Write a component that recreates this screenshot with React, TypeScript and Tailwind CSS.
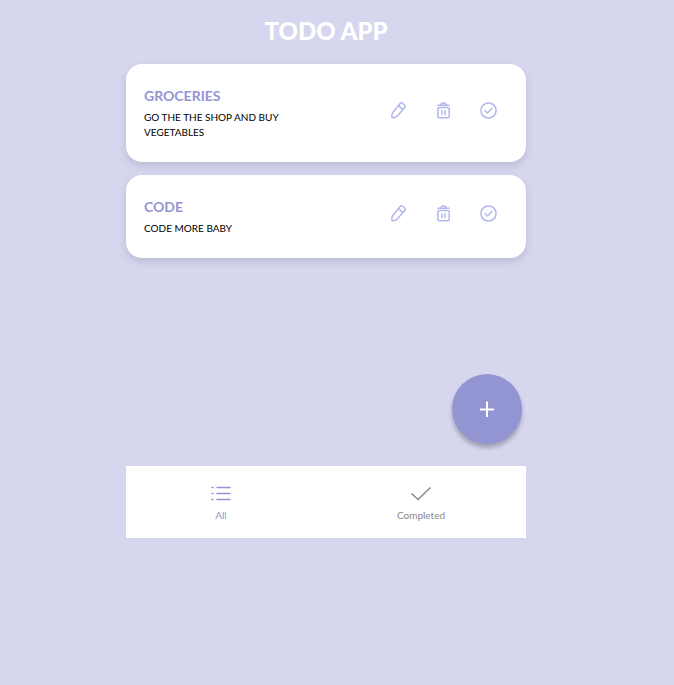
import React from "react";

type Todo = { title: string; detail: string };

const todos: Todo[] = [
  { title: "GROCERIES", detail: "GO THE THE SHOP AND BUY VEGETABLES" },
  { title: "CODE", detail: "CODE MORE BABY" },
];

function PencilIcon() {
  return (
    <svg viewBox="0 0 20 20" className="size-5" fill="none" stroke="currentColor" strokeWidth="1.5" strokeLinejoin="round" aria-hidden="true">
      <path d="M11.100 3.500 3.800 12.400c-.4.5-.7 1.100-.8 1.700l-.2 2.700c0 .7.4 1.100 1.100 1l2.500-.5c.6-.1 1.200-.5 1.600-1l7.800-8.900c.7-.8.8-1.500 0-2.200l-2.200-2c-.8-.7-1.800-.6-2.500.3Z" />
      <path d="M10.200 4.900c.3 2.300 1.800 3.800 4.300 4.200" />
    </svg>
  );
}

function TrashIcon() {
  return (
    <svg viewBox="0 0 20 20" className="size-5" fill="none" stroke="currentColor" strokeWidth="1.5" strokeLinecap="round" strokeLinejoin="round" aria-hidden="true">
      <path d="M4 5.200h11M6.700 4.700c.4-1.300 1.200-1.800 2.800-1.800s2.400.5 2.800 1.800" />
      <rect x="3.800" y="7.400" width="11.400" height="10.400" rx="2" />
      <path d="M8 10.700v3.800M11 10.700v3.800" />
    </svg>
  );
}

function CircleCheckIcon() {
  return (
    <svg viewBox="0 0 20 20" className="size-5" fill="none" stroke="currentColor" strokeWidth="1.5" strokeLinecap="round" strokeLinejoin="round" aria-hidden="true">
      <circle cx="9.500" cy="10.500" r="7.600" />
      <path d="m5.900 10.700 2.600 2.300 4.600-4.700" />
    </svg>
  );
}

function TodoCard({ title, detail }: Todo) {
  return (
    <li className="flex items-center justify-between rounded-[16px] bg-white pt-[18px] pr-[27px] pb-[22px] pl-[18px] shadow-[0_4px_8px_rgba(0,0,0,0.12)]">
      <div className="w-40">
        <h2 className="text-[14px] leading-7 font-bold text-[#9395d3]">{title}</h2>
        <p className="text-[10px] leading-[15px] text-black">{detail}</p>
      </div>
      <div className="mb-[3px] flex gap-[25px] text-[#b3b7ee]">
        <button type="button" aria-label="Edit"><PencilIcon /></button>
        <button type="button" aria-label="Delete"><TrashIcon /></button>
        <button type="button" aria-label="Complete"><CircleCheckIcon /></button>
      </div>
    </li>
  );
}

export default function App() {
  return (
    <div className="min-h-screen bg-[#d6d7ef] pr-[22px] font-['Lato',sans-serif]">
      <main className="mx-auto flex w-full max-w-[400px] flex-col">
        <h1 className="pt-[13px] pb-[15px] text-center text-2xl leading-9 font-black text-white">TODO APP</h1>
        <ul className="flex min-h-[310px] flex-col gap-[13px]">
          {todos.map((todo) => (
            <TodoCard key={todo.title} {...todo} />
          ))}
        </ul>
        <button
          type="button"
          aria-label="Add todo"
          className="mr-1 mb-[22px] flex size-[70px] items-center justify-center self-end rounded-full bg-[#9395d3] text-white shadow-[0_4px_4px_rgba(0,0,0,0.25)]"
        >
          <svg viewBox="0 0 16 16" className="size-4" fill="none" stroke="currentColor" strokeWidth="2" aria-hidden="true">
            <path d="M8 0.500v15.500M1 8.500h14" />
          </svg>
        </button>
        <nav className="grid h-[72px] grid-cols-2 bg-white text-[10px] leading-4">
          <a href="#all" className="flex flex-col items-center justify-center gap-[3px] pt-px pr-[10px] text-[#9395d3]">
            <svg viewBox="0 0 22 22" className="size-[22px]" fill="none" stroke="currentColor" strokeWidth="1.5" strokeLinecap="round" aria-hidden="true">
              <path d="M7 5.500h13M7 11.500h13M7 17.500h13M2 5.500h1M2 11.500h1M2 17.500h1" />
            </svg>
            All
          </a>
          <a href="#completed" className="flex flex-col items-center justify-center gap-[3px] pt-px pr-[10px] text-[#8b8787]">
            <svg viewBox="0 0 22 22" className="size-[22px]" fill="none" stroke="currentColor" strokeWidth="1.500" aria-hidden="true">
              <path d="m1.500 11.500 6.500 6L20.500 5.500" />
            </svg>
            Completed
          </a>
        </nav>
      </main>
    </div>
  );
}
